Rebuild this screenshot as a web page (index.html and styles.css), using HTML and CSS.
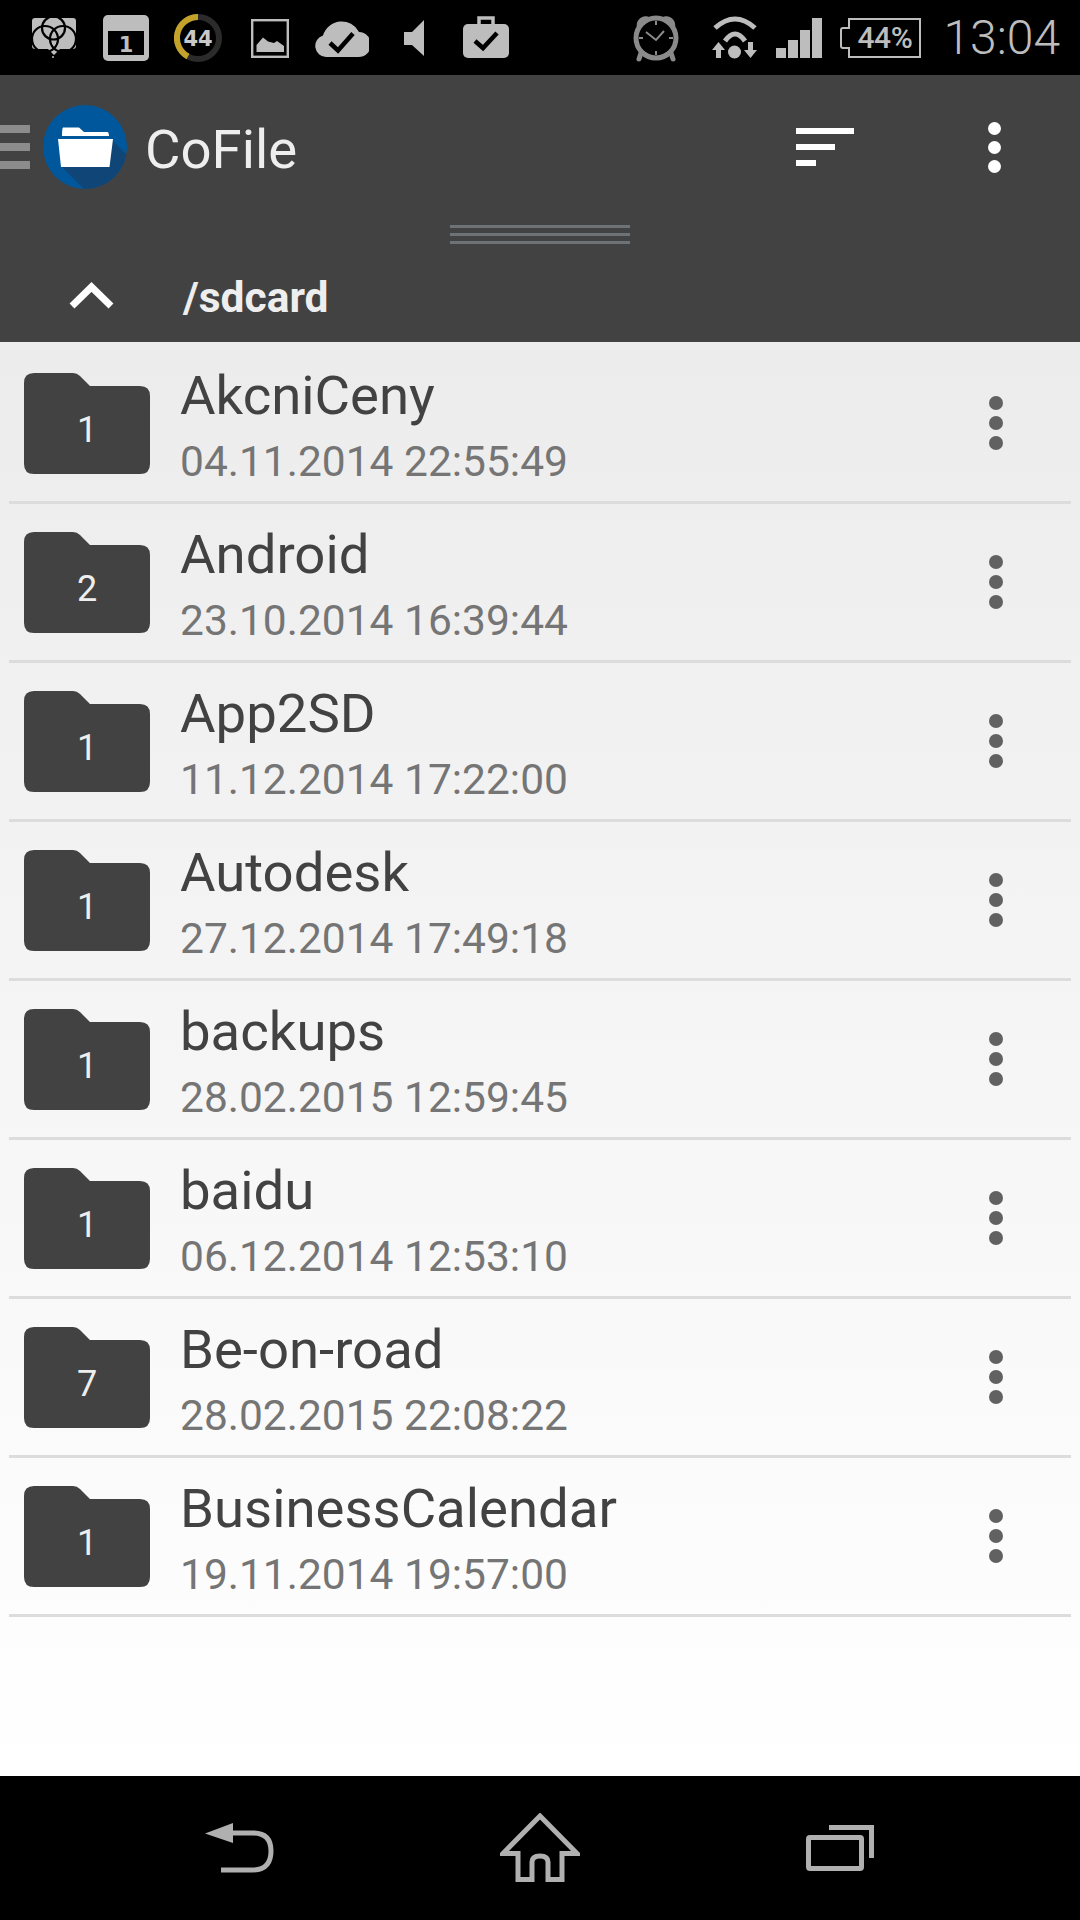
FILE: index.html
```html
<!DOCTYPE html>
<html lang="en">
<head>
<meta charset="utf-8">
<title>CoFile</title>
<link rel="stylesheet" href="styles.css">
</head>
<body>
<div class="screen">
  <header class="status">
    <div class="status-left">
      <span class="slot"><svg class="ic w44" viewBox="0 0 44 50"><path class="g" d="M3 5H41a3 3 0 0 1 3 3V33a3 3 0 0 1-3 3H28L22 42 16 36H3a3 3 0 0 1-3-3V8a3 3 0 0 1 3-3Z"/><g class="trq"><circle cx="21.500" cy="15" r="11.500"/><circle cx="13" cy="26" r="13"/><circle cx="31" cy="26" r="13"/></g><circle class="g" cx="21" cy="44" r="1"/></svg></span>
      <span class="slot"><svg class="ic w46" viewBox="0 0 46 50"><rect class="g" x="0" y="2" width="46" height="46" rx="5"/><rect x="5" y="18" width="36" height="24" fill="#000"/><text class="cal" x="23" y="39" text-anchor="middle">1</text></svg></span>
      <span class="slot"><svg class="ic w48" viewBox="0 0 48 50"><circle cx="24" cy="25" r="21" fill="none" stroke="#2b2b2b" stroke-width="6"/><path d="M24 4A21 21 0 0 0 14 43.500" fill="none" stroke="#c4a32a" stroke-width="6"/><text class="ring" x="24" y="33" text-anchor="middle">44</text></svg></span>
      <span class="slot"><svg class="ic w38" viewBox="0 0 38 50"><rect x="1.200" y="7.200" width="35.600" height="36.600" fill="none" stroke="#bdbdbd" stroke-width="2.400"/><path class="g" d="M5.500 39V32L12 24.500 17 28.500 23 30 26 28 33 33V39Z"/></svg></span>
      <span class="slot"><svg class="ic w54" viewBox="0 0 54 50"><path class="g" d="M11 44A11 11 0 0 1 8 22.500 19.500 19.500 0 0 1 44 19 12.500 12.500 0 0 1 43 44Z"/><path class="ck" d="M15 30L23 37.500 38 20.500"/></svg></span>
      <span class="slot"><svg class="ic w20" viewBox="0 0 20 50"><path class="g" d="M0 19H8L20 7V43L8 32H0Z"/></svg></span>
      <span class="slot"><svg class="ic w46" viewBox="0 0 46 50"><path d="M16 12V5H30V12" fill="none" stroke="#bdbdbd" stroke-width="3.500"/><rect class="g" x="0" y="11" width="46" height="34" rx="5"/><path class="ck" d="M12 28L20 35 34 20"/></svg></span>
    </div>
    <div class="status-right">
      <svg class="ic w46 alarm" viewBox="0 0 46 50"><circle class="almc" cx="23" cy="25" r="20"/><path class="almf" d="M4 15C2 6 11 0 18 5ZM42 15C44 6 35 0 28 5Z"/><path class="almh" d="M23 8V12M23 38V42M6 25H10M36 25H40M13 19L23 27 31 18"/><path class="almt" d="M8 40L6 46M38 40L40 46"/></svg>
      <svg class="ic w46 wifi" viewBox="0 0 46 50"><path class="wf" d="M3 15Q23-3 43 15M13 28Q23 14 33 28"/><circle class="g" cx="22.500" cy="39" r="6.500"/><path class="g" d="M6.500 29L13 37H9V45H4V37H0ZM38.500 45L45 37H41V29H36V37H32Z"/></svg>
      <svg class="ic w46 signal" viewBox="0 0 46 50"><path class="g" d="M0 35H10V45H0ZM12 27H22V45H12ZM24 17H34V45H24ZM36 5H46V45H36Z"/></svg>
      <div class="battery"><svg class="batt-shape" viewBox="0 0 81 40"><path d="M9 1H80V39H9V30H3Q1 30 1 28V12Q1 10 3 10H9Z"/></svg><span class="batt-text">44%</span></div>
      <time class="clock">13:04</time>
    </div>
  </header>

  <section class="appbar">
    <div class="toolbar">
      <svg class="burger" viewBox="0 0 30 44"><path d="M0 0H30V8H0ZM0 18H30V26H0ZM0 36H30V44H0Z"/></svg>
      <svg class="logo" viewBox="0 0 84 84"><defs><clipPath id="lc"><circle cx="42" cy="42" r="42"/></clipPath></defs><circle cx="42" cy="42" r="42" fill="#01579b"/><path clip-path="url(#lc)" d="M69 35L100 66 60 103 18 61Z" fill="#0f4577"/><path fill="#fff" d="M20 22.500H36L41 27H64Q66 27 66 31H19Q19 23 20 22.500Z"/><path fill="#fff" d="M15 34H70L66.500 62H18Z"/></svg>
      <h1 class="title">CoFile</h1>
      <svg class="sort" viewBox="0 0 58 38"><path d="M0 0H58V6H0ZM0 16H39V22H0ZM0 32H20V38H0Z"/></svg>
      <svg class="more" viewBox="0 0 13 51"><circle cx="6.500" cy="6.500" r="6.500"/><circle cx="6.500" cy="25.500" r="6.500"/><circle cx="6.500" cy="44.500" r="6.500"/></svg>
    </div>
    <div class="handle"><span></span><span></span><span></span></div>
    <div class="pathbar">
      <svg class="up" viewBox="0 0 45 28"><path d="M3 25L22.500 6 42 25"/></svg>
      <span class="path">/sdcard</span>
    </div>
  </section>

  <ul class="list">
    <li class="row"><span class="folder"><svg viewBox="0 0 126 101"><path d="M10 0H49Q53 0 56 3L66 13H116Q126 13 126 23V91Q126 101 116 101H10Q0 101 0 91V10Q0 0 10 0Z"/></svg><b>1</b></span><div class="meta"><div class="name">AkcniCeny</div><div class="date">04.11.2014 22:55:49</div></div><svg class="rowmore" viewBox="0 0 14 54"><circle cx="7" cy="7" r="7"/><circle cx="7" cy="27" r="7"/><circle cx="7" cy="47" r="7"/></svg></li>
    <li class="row"><span class="folder"><svg viewBox="0 0 126 101"><path d="M10 0H49Q53 0 56 3L66 13H116Q126 13 126 23V91Q126 101 116 101H10Q0 101 0 91V10Q0 0 10 0Z"/></svg><b>2</b></span><div class="meta"><div class="name">Android</div><div class="date">23.10.2014 16:39:44</div></div><svg class="rowmore" viewBox="0 0 14 54"><circle cx="7" cy="7" r="7"/><circle cx="7" cy="27" r="7"/><circle cx="7" cy="47" r="7"/></svg></li>
    <li class="row"><span class="folder"><svg viewBox="0 0 126 101"><path d="M10 0H49Q53 0 56 3L66 13H116Q126 13 126 23V91Q126 101 116 101H10Q0 101 0 91V10Q0 0 10 0Z"/></svg><b>1</b></span><div class="meta"><div class="name">App2SD</div><div class="date">11.12.2014 17:22:00</div></div><svg class="rowmore" viewBox="0 0 14 54"><circle cx="7" cy="7" r="7"/><circle cx="7" cy="27" r="7"/><circle cx="7" cy="47" r="7"/></svg></li>
    <li class="row"><span class="folder"><svg viewBox="0 0 126 101"><path d="M10 0H49Q53 0 56 3L66 13H116Q126 13 126 23V91Q126 101 116 101H10Q0 101 0 91V10Q0 0 10 0Z"/></svg><b>1</b></span><div class="meta"><div class="name">Autodesk</div><div class="date">27.12.2014 17:49:18</div></div><svg class="rowmore" viewBox="0 0 14 54"><circle cx="7" cy="7" r="7"/><circle cx="7" cy="27" r="7"/><circle cx="7" cy="47" r="7"/></svg></li>
    <li class="row"><span class="folder"><svg viewBox="0 0 126 101"><path d="M10 0H49Q53 0 56 3L66 13H116Q126 13 126 23V91Q126 101 116 101H10Q0 101 0 91V10Q0 0 10 0Z"/></svg><b>1</b></span><div class="meta"><div class="name">backups</div><div class="date">28.02.2015 12:59:45</div></div><svg class="rowmore" viewBox="0 0 14 54"><circle cx="7" cy="7" r="7"/><circle cx="7" cy="27" r="7"/><circle cx="7" cy="47" r="7"/></svg></li>
    <li class="row"><span class="folder"><svg viewBox="0 0 126 101"><path d="M10 0H49Q53 0 56 3L66 13H116Q126 13 126 23V91Q126 101 116 101H10Q0 101 0 91V10Q0 0 10 0Z"/></svg><b>1</b></span><div class="meta"><div class="name">baidu</div><div class="date">06.12.2014 12:53:10</div></div><svg class="rowmore" viewBox="0 0 14 54"><circle cx="7" cy="7" r="7"/><circle cx="7" cy="27" r="7"/><circle cx="7" cy="47" r="7"/></svg></li>
    <li class="row"><span class="folder"><svg viewBox="0 0 126 101"><path d="M10 0H49Q53 0 56 3L66 13H116Q126 13 126 23V91Q126 101 116 101H10Q0 101 0 91V10Q0 0 10 0Z"/></svg><b>7</b></span><div class="meta"><div class="name">Be-on-road</div><div class="date">28.02.2015 22:08:22</div></div><svg class="rowmore" viewBox="0 0 14 54"><circle cx="7" cy="7" r="7"/><circle cx="7" cy="27" r="7"/><circle cx="7" cy="47" r="7"/></svg></li>
    <li class="row"><span class="folder"><svg viewBox="0 0 126 101"><path d="M10 0H49Q53 0 56 3L66 13H116Q126 13 126 23V91Q126 101 116 101H10Q0 101 0 91V10Q0 0 10 0Z"/></svg><b>1</b></span><div class="meta"><div class="name">BusinessCalendar</div><div class="date">19.11.2014 19:57:00</div></div><svg class="rowmore" viewBox="0 0 14 54"><circle cx="7" cy="7" r="7"/><circle cx="7" cy="27" r="7"/><circle cx="7" cy="47" r="7"/></svg></li>
  </ul>

  <nav class="navbar">
    <span class="navitem"><svg class="nav-back" viewBox="0 0 70 50"><path class="nf" d="M0 10.500L28 0V20Z"/><path class="ns" d="M24 10H48C62 10 66 18 66 28C66 38 62 47 48 47H16"/></svg></span>
    <span class="navitem"><svg class="nav-home" viewBox="0 0 80 70"><path class="ns" d="M40 3L77 40.500H62V66.500H48V49Q48 43 40 43 32 43 32 49V66.500H18V40.500H3Z"/></svg></span>
    <span class="navitem"><svg class="nav-rec" viewBox="0 0 68 46"><path class="ns" d="M23 2.500H65.500V33"/><rect class="ns" x="2.500" y="12.500" width="53" height="31" rx="1.500"/></svg></span>
  </nav>
</div>
</body>
</html>
```
FILE: styles.css
```css
* { box-sizing: border-box; }
html, body { margin: 0; padding: 0; }
body { font-family: Roboto, "Liberation Sans", sans-serif; background: #000; }
.screen { width: 1080px; height: 1920px; display: flex; flex-direction: column; overflow: hidden; }

.status { height: 75px; background: #000; display: flex; justify-content: space-between; align-items: center; flex: none; }
.status-left { display: flex; padding-left: 18px; }
.slot { width: 72px; display: flex; justify-content: center; }
.status-right { display: flex; align-items: center; padding-right: 20px; }
.ic { height: 50px; display: block; flex: none; }
.w20 { width: 20px; } .w38 { width: 38px; } .w44 { width: 44px; } .w46 { width: 46px; } .w48 { width: 48px; } .w54 { width: 54px; }
.g { fill: #bdbdbd; }
.trq circle { fill: none; stroke: #000; stroke-width: 2.2; }
.cal { font: bold 21px "DejaVu Sans", sans-serif; fill: #bdbdbd; }
.ring { font: bold 21px "DejaVu Sans", sans-serif; fill: #c9c9c9; }
.ck { fill: none; stroke: #000; stroke-width: 4.500; }
.almc { fill: none; stroke: #8a8a8a; stroke-width: 5; }
.almf { fill: #8a8a8a; }
.almh { fill: none; stroke: #8a8a8a; stroke-width: 2; }
.almt { fill: none; stroke: #8a8a8a; stroke-width: 5; stroke-linecap: round; }
.wf { fill: none; stroke: #bdbdbd; stroke-width: 5; }
.alarm { margin-right: 33px; }
.wifi { margin-right: 18px; }
.signal { margin-right: 18px; }

.battery { width: 81px; height: 40px; display: grid; margin-right: 22px; flex: none; }
.batt-shape { grid-area: 1 / 1; width: 81px; height: 40px; fill: none; stroke: #bdbdbd; stroke-width: 2; }
.batt-text { grid-area: 1 / 1; color: #bdbdbd; font-size: 30px; font-weight: 500; line-height: 40px; text-align: center; letter-spacing: -0.5px; padding-left: 8px; }
.clock { color: #bdbdbd; font-size: 48px; font-weight: 350; line-height: 56px; }

.appbar { height: 267px; background: #424242; flex: none; display: flex; flex-direction: column; }
.toolbar { height: 144px; display: flex; align-items: center; flex: none; }
.burger { width: 30px; height: 44px; fill: #8c8c8c; flex: none; }
.logo { width: 84px; height: 84px; margin-left: 13px; flex: none; }
.title { margin: 4px 0 0 18px; font-size: 54.5px; font-weight: 400; color: #eeeeee; line-height: 64px; }
.sort { width: 58px; height: 38px; fill: #fff; margin-left: auto; flex: none; }
.more { width: 13px; height: 51px; fill: #fff; margin-left: 134px; margin-right: 79px; flex: none; }
.handle { height: 30px; padding: 6px 0 0 450px; display: flex; flex-direction: column; gap: 5px; flex: none; }
.handle span { display: block; width: 180px; height: 3px; background: #6d7277; }
.pathbar { flex: 1; display: flex; align-items: center; padding-left: 69px; }
.up { width: 45px; height: 28px; fill: none; stroke: #fff; stroke-width: 7; flex: none; margin-bottom: 2px; }
.path { margin: 4px 0 0 69px; font-size: 42.5px; font-weight: 700; color: #eeeeee; line-height: 48px; }

.list { flex: 1; margin: 0; padding: 3px 9px 0; list-style: none; background: linear-gradient(#ececec, #ffffff); }
.row { height: 159px; border-bottom: 3px solid #dcdcdc; display: flex; align-items: center; padding-left: 15px; }
.folder { width: 126px; height: 101px; display: grid; place-items: center; flex: none; }
.folder svg { grid-area: 1 / 1; width: 126px; height: 101px; fill: #424242; display: block; }
.folder b { grid-area: 1 / 1; font-size: 36px; font-weight: 400; color: #eeeeee; line-height: 40px; padding-top: 13px; }
.meta { margin-left: 30px; flex: 1; }
.name { font-size: 54.5px; font-weight: 400; color: #424242; line-height: 60px; }
.date { font-size: 42.5px; font-weight: 400; color: #757575; line-height: 50px; padding-top: 12px; margin-bottom: -6px; }
.rowmore { width: 14px; height: 54px; fill: #616161; margin-right: 68px; flex: none; }

.navbar { height: 144px; background: #000; display: grid; grid-template-columns: 300px 300px 300px; padding-left: 90px; align-items: center; flex: none; }
.navitem { display: flex; justify-content: center; }
.ns { fill: none; stroke: #b0b0b0; stroke-width: 5; }
.nf { fill: #b0b0b0; }
.nav-back { width: 70px; height: 50px; }
.nav-home { width: 80px; height: 70px; }
.nav-rec { width: 68px; height: 46px; }
```
